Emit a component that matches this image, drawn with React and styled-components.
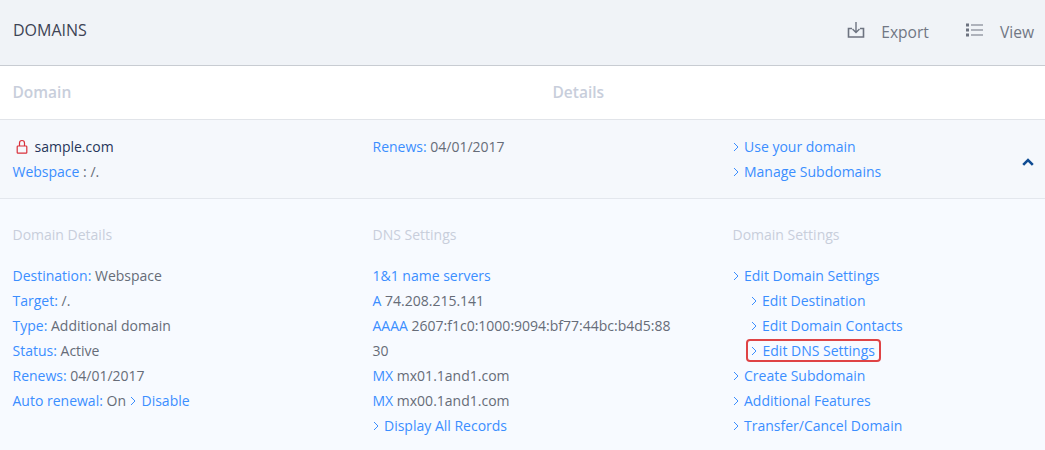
import React from 'react';
import styled, { createGlobalStyle } from 'styled-components';

const GlobalStyle = createGlobalStyle`
  html, body {
    margin: 0;
    padding: 0;
    background: #f7faff;
  }
  body {
    font-family: "Open Sans", "Noto Sans", sans-serif;
    font-size: 14px;
    line-height: 25px;
    color: #666c78;
  }
`;

const Page = styled.div`
  width: 1045px;
  height: 450px;
  overflow: hidden;
`;

const Toolbar = styled.header`
  display: flex;
  align-items: center;
  justify-content: space-between;
  height: 60px;
  padding: 0 11px 5px 13px;
  background: #f0f3f7;
  border-bottom: 1px solid #c8ccd2;
`;

const Title = styled.h1`
  margin: 0;
  font-size: 16px;
  font-weight: 400;
  color: #3d4354;
`;

const Actions = styled.div`
  display: flex;
  align-items: center;
  gap: 37px;
  padding-top: 4px;
`;

const Action = styled.span`
  display: flex;
  align-items: center;
  gap: ${(p) => p.$gap}px;
  font-size: 15.6px;
  color: #717784;

  svg {
    margin-top: -4px;
  }
`;

const TableHead = styled.div`
  display: flex;
  height: 53px;
  align-items: center;
  padding-left: 12.5px;
  background: #fff;
  border-bottom: 1px solid #e1e4e9;
`;

const HeadCell = styled.div`
  width: ${(p) => p.$width}px;
  font-size: 15.5px;
  font-weight: 600;
  color: #c8cedb;
`;

const Row = styled.div`
  position: relative;
  display: grid;
  grid-template-columns: 360px 360px 1fr;
  height: 64px;
  padding: 14px 0 0 12.5px;
  background: #f5f8fc;
  border-bottom: 1px solid #e3e7ed;
`;

const Details = styled.div`
  display: grid;
  grid-template-columns: 360px 360px 1fr;
  padding: 23px 0 0 12.5px;
  background: #f7faff;
`;

const Column = styled.div`
  display: flex;
  flex-direction: column;
  align-items: flex-start;
`;

const SectionTitle = styled.div`
  margin-bottom: 16px;
  color: #c8cedb;
`;

const Line = styled.div`
  width: ${(p) => (p.$wrap ? '300px' : 'auto')};
  word-break: break-all;
  white-space: ${(p) => (p.$wrap ? 'normal' : 'nowrap')};
`;

const Link = styled.a`
  color: #3b8eff;
  text-decoration: none;
`;

const DomainName = styled.div`
  display: flex;
  align-items: center;
  gap: 7px;
  padding-left: 3px;
  color: #26365a;
`;

const Arrow = styled.svg`
  width: 6px;
  height: 10px;
  margin-right: 5.5px;
  flex: none;
`;

const NavLine = styled.div`
  display: flex;
  align-items: center;
  white-space: nowrap;
  box-sizing: border-box;
  margin-left: ${(p) => (p.$nested ? '18px' : '0')};
  ${(p) =>
    p.$marked &&
    `
    margin: 1px 0 1px 13.5px;
    height: 23px;
    padding: 0 4px 0 3px;
    border: 2px solid #df4345;
    border-radius: 4px;
  `}
`;

const InlineLink = styled.span`
  display: inline-flex;
  align-items: center;
  margin-left: 4px;
`;

const Collapse = styled.svg`
  position: absolute;
  top: 38px;
  right: 11px;
  width: 12px;
  height: 8px;
`;

const Chevron = () => (
  <Arrow viewBox="0 0 6 10">
    <path d="M1 1l4 4-4 4" fill="none" stroke="#3b8eff" strokeWidth="1" />
  </Arrow>
);

const Nav = ({ children, ...rest }) => (
  <NavLine {...rest}>
    <Chevron />
    <Link>{children}</Link>
  </NavLine>
);

const Field = ({ label, children, colon = true }) => (
  <Line>
    <Link>
      {label}
      {colon ? ':' : ''}
    </Link>{' '}
    {children}
  </Line>
);

const ExportIcon = () => (
  <svg width="18" height="18" viewBox="0 0 18 18" fill="none" stroke="#6d7380">
    <path d="M5 7.5H1.5v8.5h15V7.5H13" strokeWidth="1.6" />
    <path d="M9 1v10M5.5 8L9 11.5 12.5 8" strokeWidth="1.4" />
  </svg>
);

const ViewIcon = () => (
  <svg width="17" height="14" viewBox="0 0 17 14" fill="#6d7380">
    <rect x="0" y="0.5" width="3" height="3" />
    <rect x="0" y="5.5" width="3" height="3" />
    <rect x="0" y="10.5" width="3" height="3" />
    <rect x="5" y="1.5" width="12" height="1" />
    <rect x="5" y="6.5" width="12" height="1" />
    <rect x="5" y="11.5" width="12" height="1" />
  </svg>
);

const LockIcon = () => (
  <svg width="12" height="15" viewBox="0 0 12 15" fill="none" stroke="#d9303a" strokeWidth="1.2">
    <path d="M3.5 7V4a2.5 2.5 0 0 1 5 0v3" />
    <rect x="1.2" y="7" width="9.6" height="7.2" rx="0.8" />
  </svg>
);

export default function App() {
  return (
    <Page>
      <GlobalStyle />
      <Toolbar>
        <Title>DOMAINS</Title>
        <Actions>
          <Action $gap={16}>
            <ExportIcon />
            Export
          </Action>
          <Action $gap={17}>
            <ViewIcon />
            View
          </Action>
        </Actions>
      </Toolbar>
      <TableHead>
        <HeadCell $width={540}>Domain</HeadCell>
        <HeadCell $width={300}>Details</HeadCell>
      </TableHead>
      <Row>
        <Column>
          <DomainName>
            <LockIcon />
            sample.com
          </DomainName>
          <Line>
            <Link>Webspace</Link> : /.
          </Line>
        </Column>
        <Column>
          <Field label="Renews">04/01/2017</Field>
        </Column>
        <Column>
          <Nav>Use your domain</Nav>
          <Nav>Manage Subdomains</Nav>
        </Column>
        <Collapse viewBox="0 0 12 8">
          <path d="M1.2 6.8L6 2l4.8 4.8" fill="none" stroke="#0f4c93" strokeWidth="2.6" />
        </Collapse>
      </Row>
      <Details>
        <Column>
          <SectionTitle>Domain Details</SectionTitle>
          <Field label="Destination">Webspace</Field>
          <Field label="Target">/.</Field>
          <Field label="Type">Additional domain</Field>
          <Field label="Status">Active</Field>
          <Field label="Renews">04/01/2017</Field>
          <NavLine>
            <Link>Auto renewal:</Link>
            <span>&nbsp;On</span>
            <InlineLink>
              <Chevron />
              <Link>Disable</Link>
            </InlineLink>
          </NavLine>
        </Column>
        <Column>
          <SectionTitle>DNS Settings</SectionTitle>
          <Line>
            <Link>1&amp;1 name servers</Link>
          </Line>
          <Field label="A" colon={false}>74.208.215.141</Field>
          <Line $wrap>
            <Link>AAAA</Link> 2607:f1c0:1000:9094:bf77:44bc:b4d5:8830
          </Line>
          <Field label="MX" colon={false}>mx01.1and1.com</Field>
          <Field label="MX" colon={false}>mx00.1and1.com</Field>
          <Nav>Display All Records</Nav>
        </Column>
        <Column>
          <SectionTitle>Domain Settings</SectionTitle>
          <Nav>Edit Domain Settings</Nav>
          <Nav $nested>Edit Destination</Nav>
          <Nav $nested>Edit Domain Contacts</Nav>
          <Nav $marked>Edit DNS Settings</Nav>
          <Nav>Create Subdomain</Nav>
          <Nav>Additional Features</Nav>
          <Nav>Transfer/Cancel Domain</Nav>
        </Column>
      </Details>
    </Page>
  );
}
